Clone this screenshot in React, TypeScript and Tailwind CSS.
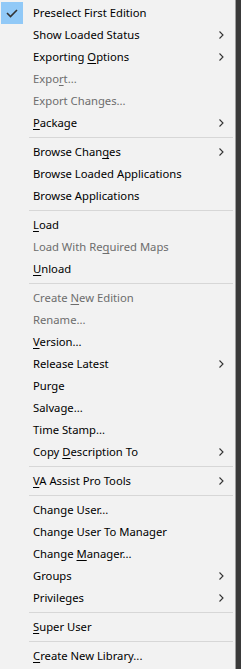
import React from "react";

type Item =
  | { sep: true }
  | {
      sep?: false;
      label: string;
      mn?: number; // index of mnemonic letter
      disabled?: boolean;
      sub?: boolean;
      checked?: boolean;
    };

const items: Item[] = [
  { label: "Preselect First Edition", checked: true },
  { label: "Show Loaded Status", sub: true },
  { label: "Exporting Options", mn: 10, sub: true },
  { label: "Export...", mn: 4, disabled: true },
  { label: "Export Changes...", disabled: true },
  { label: "Package", mn: 0, sub: true },
  { sep: true },
  { label: "Browse Changes", mn: 11, sub: true },
  { label: "Browse Loaded Applications" },
  { label: "Browse Applications" },
  { sep: true },
  { label: "Load", mn: 0 },
  { label: "Load With Required Maps", mn: 12, disabled: true },
  { label: "Unload", mn: 0 },
  { sep: true },
  { label: "Create New Edition", mn: 7, disabled: true },
  { label: "Rename...", disabled: true },
  { label: "Version...", mn: 0 },
  { label: "Release Latest", sub: true },
  { label: "Purge" },
  { label: "Salvage..." },
  { label: "Time Stamp..." },
  { label: "Copy Description To", mn: 5, sub: true },
  { sep: true },
  { label: "VA Assist Pro Tools", mn: 0, sub: true },
  { sep: true },
  { label: "Change User..." },
  { label: "Change User To Manager" },
  { label: "Change Manager...", mn: 7 },
  { label: "Groups", sub: true },
  { label: "Privileges", sub: true },
  { sep: true },
  { label: "Super User", mn: 0 },
  { sep: true },
  { label: "Create New Library...", mn: 0 },
];

const Label = ({ text, mn }: { text: string; mn?: number }) => {
  if (mn === undefined) return <>{text}</>;
  return (
    <>
      {text.slice(0, mn)}
      <span className="underline underline-offset-2">{text[mn]}</span>
      {text.slice(mn + 1)}
    </>
  );
};

const App = () => {
  return (
    <div className="flex w-[241px] h-[669px] bg-[#3a3a3a]">
      <div
        className="w-[236px] h-[669px] bg-[#f2f2f2] border-r border-[#a0a0a0] py-[2px] text-[11.25px] text-black"
        style={{ fontFamily: '"Segoe UI", "Noto Sans", sans-serif' }}
      >
        {items.map((it, i) =>
          it.sep ? (
            <div key={i} className="h-[7px] flex items-center pl-[29px] pr-[2px]">
              <div className="h-px w-full bg-[#d7d7d7]" />
            </div>
          ) : (
            <div key={i} className="relative flex items-center h-[22px]">
              <div className="w-[33px] h-[22px] flex items-center pl-[1px]">
                {it.checked && (
                  <div className="w-[22px] h-[22px] bg-[#91c9f7] flex items-center justify-center">
                    <svg width="12" height="10" viewBox="0 0 12 10">
                      <path
                        d="M1 5 L4.5 8.5 L11 2"
                        fill="none"
                        stroke="#333"
                        strokeWidth="1.6"
                      />
                    </svg>
                  </div>
                )}
              </div>
              <span
                className={
                  "whitespace-nowrap leading-none " +
                  (it.disabled ? "text-[#6d6d6d]" : "text-black")
                }
              >
                <Label text={it.label} mn={it.mn} />
              </span>
              {it.sub && (
                <svg
                  className="absolute left-[219px] top-[7px]"
                  width="5"
                  height="8"
                  viewBox="0 0 5 8"
                >
                  <path d="M0.5 0.5 L4 4 L0.5 7.5" fill="none" stroke="#333" strokeWidth="1.1" />
                </svg>
              )}
            </div>
          )
        )}
      </div>
    </div>
  );
};

export default App;
